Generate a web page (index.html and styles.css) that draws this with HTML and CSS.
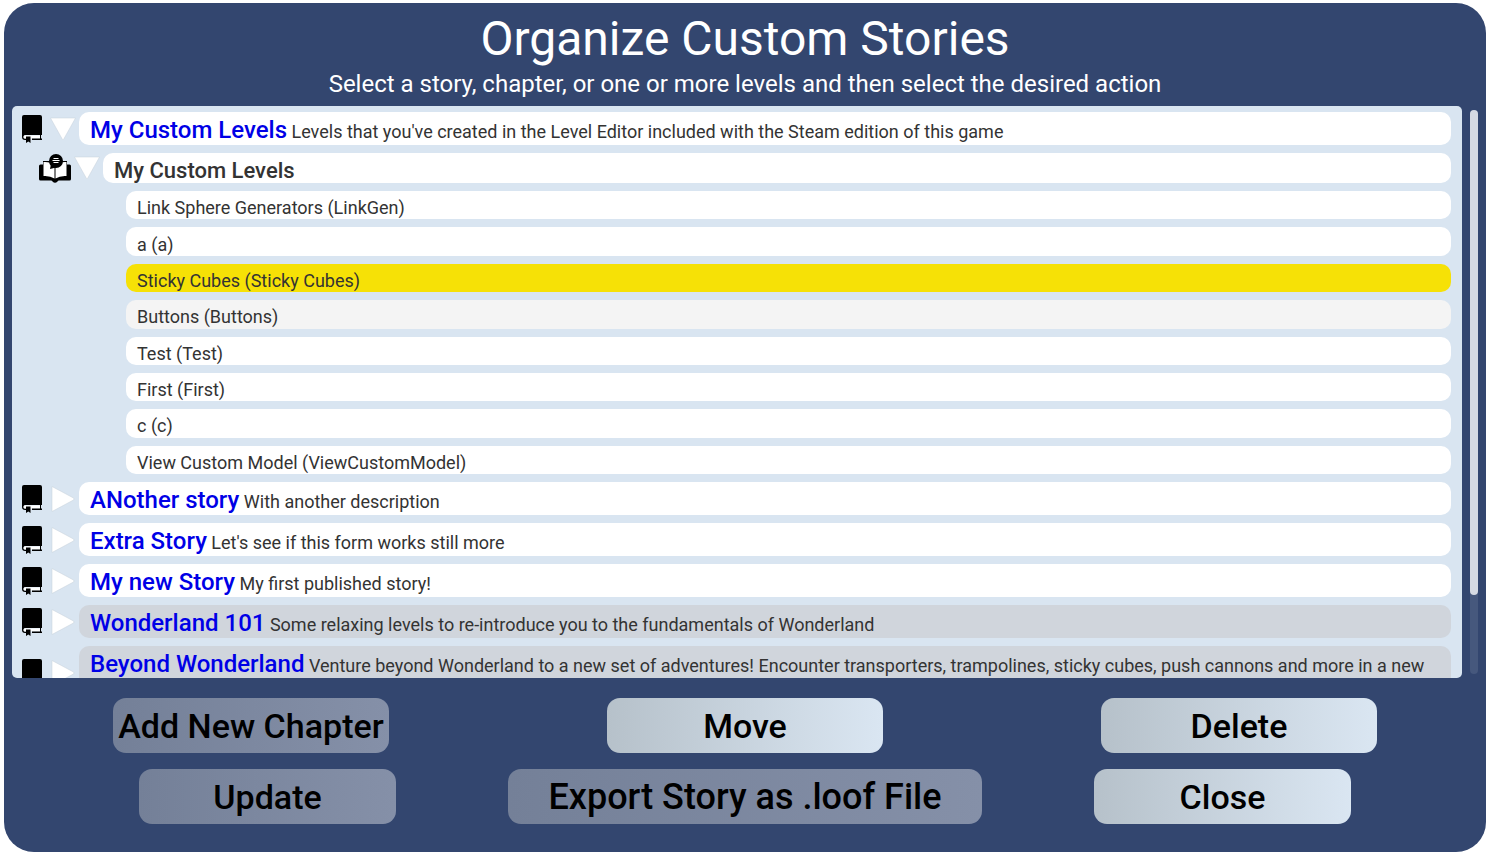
FILE: index.html
```html
<!DOCTYPE html>
<html lang="en">
<head>
  <meta charset="UTF-8">
  <meta name="viewport" content="width=device-width, initial-scale=1">
  <title>Organize Custom Stories</title>
  <link rel="stylesheet" href="styles.css">
</head>
<body>

<!-- shared icons -->
<svg class="sprite" aria-hidden="true">
  <symbol id="book" viewBox="0 0 20 28">
    <path d="M2 0H18Q20 0 20 2V20H3Q1.500 20 1.500 22Q1.500 23.500 3 23.500H4V25H3Q0 25 0 22V2Q0 0 2 0Z"/>
    <path class="paper" d="M3 20.500H18.500V23.500H3Q1.500 23.500 1.500 22Q1.500 20.500 3 20.500Z"/>
    <path d="M18 20H19V23.500H20V25H10V23.500H18Z"/>
    <path d="M4 21.500H8.500V28L6.300 26.500L4 28Z"/>
  </symbol>
  <symbol id="open-book" viewBox="0 0 32 29">
    <path d="M0 12Q0 10.500 1.500 10.500H4V7H28V10.500H30.500Q32 10.500 32 12V25Q32 26.500 30.500 26.500H20Q19 26.500 18.500 27.500Q16 30 13.500 27.500Q13 26.500 12 26.500H1.500Q0 26.500 0 25Z"/>
    <path class="paper" d="M4.500 8Q11 7.500 15.500 11V24.500Q11 21.500 4.500 22Z"/>
    <path class="paper" d="M27.500 8Q21 7.500 16.500 11V24.500Q21 21.500 27.500 22Z"/>
    <circle cx="17" cy="7" r="7"/>
    <path d="M12 10L11 15L17 13.500Z"/>
    <path class="lines" d="M14.500 4.500H19.500M13.500 6.500H20.500M14.500 8.500H19.500"/>
  </symbol>
  <symbol id="arrow-down" viewBox="0 0 26 24">
    <path class="triangle" d="M.5 1H25.500L13.500 22.500Q13 23.500 12.500 22.500Z"/>
  </symbol>
  <symbol id="arrow-right" viewBox="0 0 24 26">
    <path class="triangle" d="M1 .5V25.500L22.500 14Q23.500 13 22.500 12Z"/>
  </symbol>
</svg>

<main class="panel">
  <header class="header">
    <h1 class="title">Organize Custom Stories</h1>
    <p class="subtitle">Select a story, chapter, or one or more levels and then select the desired action</p>
  </header>

  <div class="browser">
    <ul class="stories">
      <li>
        <div class="row">
          <svg class="icon-book"><use href="#book"/></svg>
          <button class="toggle" aria-expanded="true" aria-label="Collapse My Custom Levels story"><svg class="down"><use href="#arrow-down"/></svg></button>
          <button class="item story"><span class="name">My Custom Levels</span> Levels that you've created in the Level Editor included with the Steam edition of this game</button>
        </div>
        <div class="row chapter-row">
          <svg class="icon-open-book"><use href="#open-book"/></svg>
          <button class="toggle" aria-expanded="true" aria-label="Collapse My Custom Levels chapter"><svg class="down"><use href="#arrow-down"/></svg></button>
          <button class="item chapter">My Custom Levels</button>
        </div>
        <ul class="levels">
          <li><button class="item level">Link Sphere Generators (LinkGen)</button></li>
          <li><button class="item level">a (a)</button></li>
          <li><button class="item level selected" aria-pressed="true">Sticky Cubes (Sticky Cubes)</button></li>
          <li><button class="item level hovered">Buttons (Buttons)</button></li>
          <li><button class="item level">Test (Test)</button></li>
          <li><button class="item level">First (First)</button></li>
          <li><button class="item level">c (c)</button></li>
          <li><button class="item level">View Custom Model (ViewCustomModel)</button></li>
        </ul>
      </li>
      <li class="row">
        <svg class="icon-book"><use href="#book"/></svg>
        <button class="toggle" aria-expanded="false" aria-label="Expand ANother story"><svg class="right"><use href="#arrow-right"/></svg></button>
        <button class="item story"><span class="name">ANother story</span> With another description</button>
      </li>
      <li class="row">
        <svg class="icon-book"><use href="#book"/></svg>
        <button class="toggle" aria-expanded="false" aria-label="Expand Extra Story"><svg class="right"><use href="#arrow-right"/></svg></button>
        <button class="item story"><span class="name">Extra Story</span> Let's see if this form works still more</button>
      </li>
      <li class="row">
        <svg class="icon-book"><use href="#book"/></svg>
        <button class="toggle" aria-expanded="false" aria-label="Expand My new Story"><svg class="right"><use href="#arrow-right"/></svg></button>
        <button class="item story"><span class="name">My new Story</span> My first published story!</button>
      </li>
      <li class="row">
        <svg class="icon-book"><use href="#book"/></svg>
        <button class="toggle" aria-expanded="false" aria-label="Expand Wonderland 101"><svg class="right"><use href="#arrow-right"/></svg></button>
        <button class="item story locked"><span class="name">Wonderland 101</span> Some relaxing levels to re-introduce you to the fundamentals of Wonderland</button>
      </li>
      <li class="row">
        <svg class="icon-book"><use href="#book"/></svg>
        <button class="toggle" aria-expanded="false" aria-label="Expand Beyond Wonderland"><svg class="right"><use href="#arrow-right"/></svg></button>
        <button class="item story locked tall"><span class="name">Beyond Wonderland</span> Venture beyond Wonderland to a new set of adventures! Encounter transporters, trampolines, sticky cubes, push cannons and more in a new</button>
      </li>
    </ul>
    <div class="scrollbar"><div class="thumb"></div></div>
  </div>

  <footer class="actions">
    <div class="action-row thirds">
      <button class="action" disabled>Add New Chapter</button>
      <button class="action">Move</button>
      <button class="action">Delete</button>
    </div>
    <div class="action-row">
      <button class="action short" disabled>Update</button>
      <button class="action wide" disabled>Export Story as .loof File</button>
      <button class="action short">Close</button>
    </div>
  </footer>
</main>

</body>
</html>
```
FILE: styles.css
```css
* {
  margin: 0;
  padding: 0;
  box-sizing: border-box;
  list-style: none;
}
body {
  padding: 3px 6px 4px 4px;
  background-color: #fff;
  font-family: Roboto, "Liberation Sans", sans-serif;
}
button {
  border: 0;
  font: inherit;
  color: inherit;
  cursor: pointer;
}
.sprite {
  display: none;
}

.panel {
  display: flex;
  flex-direction: column;
  height: calc(100vh - 7px);
  padding-bottom: 28px;
  border-radius: 30px;
  background-color: #33466f;
}
.header {
  padding-top: 6px;
  height: 103px;
  color: #fff;
  text-align: center;
}
.title {
  font-size: 48px;
  font-weight: 400;
  line-height: 60px;
}
.subtitle {
  font-size: 24px;
  line-height: 30px;
}

/* story list */
.browser {
  flex: 1;
  min-height: 0;
  display: flex;
  gap: 8px;
  padding: 0 8px;
}
.stories {
  flex: 1;
  display: flex;
  flex-direction: column;
  gap: 8px;
  padding: 6px 11px 0 10px;
  overflow: hidden;
  border-radius: 5px;
  background-color: #d9e5f1;
}
.row {
  display: flex;
  align-items: center;
  flex-shrink: 0;
}
.icon-book {
  flex: none;
  width: 20px;
  height: 28px;
  margin-right: 8px;
}
.icon-open-book {
  flex: none;
  width: 32px;
  height: 29px;
  margin-right: 3px;
}
.paper {
  fill: #fff;
}
.lines {
  stroke: #fff;
  stroke-width: 1;
}
.triangle {
  fill: #fff;
  stroke: #c6d0da;
  stroke-width: .5;
}
.toggle {
  flex: none;
  width: 29px;
  height: 26px;
  padding-right: 3px;
  background: none;
}
.toggle svg {
  display: block;
  margin: 0 auto;
}
.down {
  width: 26px;
  height: 24px;
}
.right {
  width: 24px;
  height: 26px;
}
.item {
  display: block;
  flex: 1;
  padding: 6px 11px 0;
  border-radius: 10px;
  background-color: #fff;
  color: #333;
  text-align: left;
}
.story {
  min-height: 33px;
  font-size: 18px;
  line-height: 26px;
}
.name {
  font-size: 24px;
  font-weight: 500;
  line-height: 24px;
  color: #0000e6;
}
.chapter-row {
  margin-top: 8px;
  padding-left: 17px;
}
.chapter {
  min-height: 30px;
  font-size: 22px;
  font-weight: 500;
  line-height: 24px;
}
.levels {
  display: grid;
  grid-auto-rows: 1fr;
  gap: 8px;
  min-height: 283px;
  margin-top: 8px;
  padding-left: 104px;
}
.levels li {
  display: flex;
}
.level {
  font-size: 18px;
  line-height: 22px;
}
.item.selected {
  background-color: #f6e106;
}
.item.hovered {
  background-color: #f4f4f4;
}
.item.locked {
  background-color: #d0d5dc;
}
.item.tall {
  min-height: 53px;
  padding-bottom: 20px;
}
.scrollbar {
  width: 8px;
  margin: 4px 0;
  border-radius: 4px;
  background-color: #46587d;
}
.thumb {
  height: 86%;
  border-radius: 4px;
  background-color: #d6dae3;
}

/* bottom buttons */
.actions {
  padding-top: 20px;
}
.action-row {
  display: flex;
  justify-content: center;
  gap: 112px;
}
.thirds {
  justify-content: space-around;
  gap: 0;
  margin-bottom: 16px;
}
.action {
  width: 276px;
  height: 55px;
  border-radius: 13px;
  background-image: linear-gradient(to right, #b6c1ca, #dae6f2);
  color: #000;
  font-size: 34px;
  font-weight: 500;
  white-space: nowrap;
}
.action:disabled {
  background-image: linear-gradient(to right, #748098, #8590a8);
  cursor: default;
}
.short {
  width: 257px;
}
.wide {
  width: 474px;
  font-size: 36px;
}
```
